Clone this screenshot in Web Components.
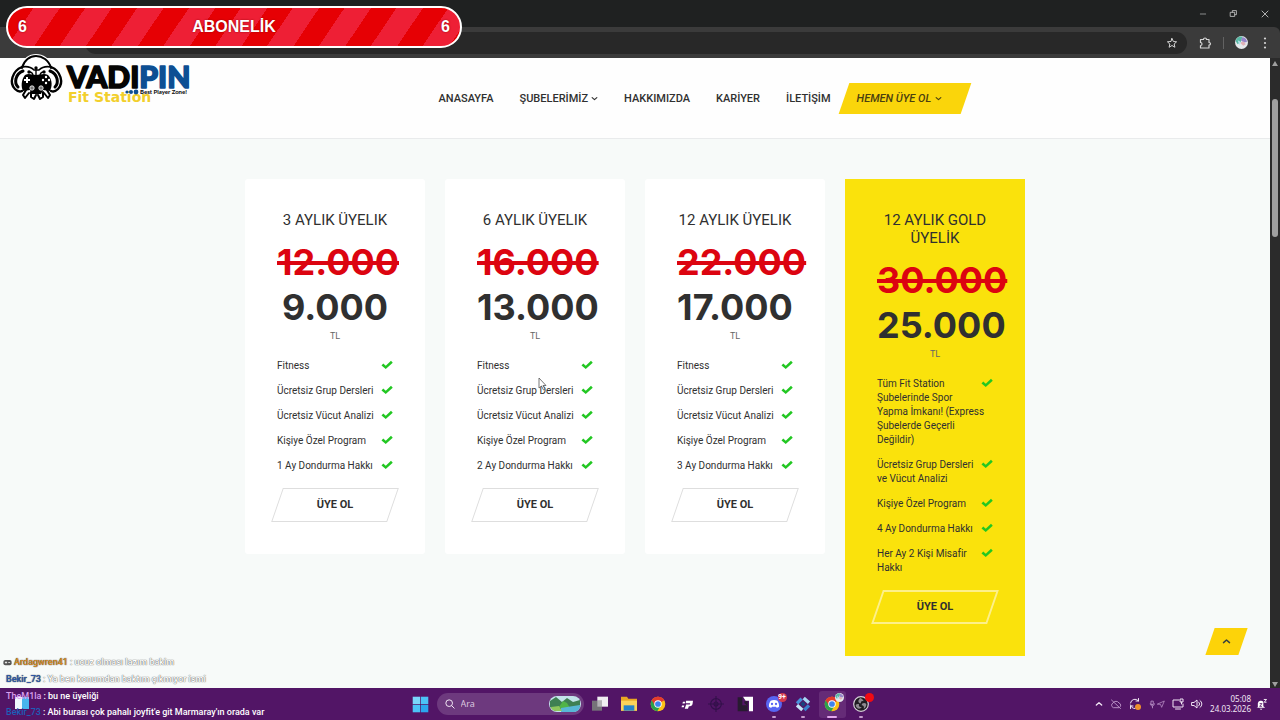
<!DOCTYPE html>
<html lang="tr">
<head>
<meta charset="utf-8">
<title>Vadipin Fit Station</title>
<style>
  * { box-sizing: border-box; }
  body {
    margin: 0;
    min-height: 100vh;
    display: flex;
    flex-direction: column;
    position: relative;
    font-family: Roboto, "Noto Sans", sans-serif;
    color: #303030;
    background: #f7faf9;
  }
  page-viewport { flex: 1; }
  .plans {
    display: grid;
    grid-template-columns: repeat(4, minmax(0, 1fr));
    align-items: start;
    gap: 20px;
    max-width: 780px;
    margin: 0 auto;
    padding: 40px 0 32px;
  }
  stream-goal { position: absolute; left: 6px; top: 6px; }
  .chat { position: absolute; left: 3px; bottom: 0; }
  mouse-pointer { position: absolute; left: 42%; top: 377px; }
</style>
</head>
<body>
  <browser-bar></browser-bar>

  <page-viewport>
    <site-header>
      <nav-link>ANASAYFA</nav-link>
      <nav-link menu>ŞUBELERİMİZ</nav-link>
      <nav-link>HAKKIMIZDA</nav-link>
      <nav-link>KARİYER</nav-link>
      <nav-link>İLETİŞİM</nav-link>
      <nav-link menu cta>HEMEN ÜYE OL</nav-link>
    </site-header>
    <main class="plans">
      <price-card old="12.000" price="9.000">
        <span slot="title">3 AYLIK ÜYELIK</span>
        <plan-feature>Fitness</plan-feature>
        <plan-feature>Ücretsiz Grup Dersleri</plan-feature>
        <plan-feature>Ücretsiz Vücut Analizi</plan-feature>
        <plan-feature>Kişiye Özel Program</plan-feature>
        <plan-feature>1 Ay Dondurma Hakkı</plan-feature>
      </price-card>
      <price-card old="16.000" price="13.000">
        <span slot="title">6 AYLIK ÜYELIK</span>
        <plan-feature>Fitness</plan-feature>
        <plan-feature>Ücretsiz Grup Dersleri</plan-feature>
        <plan-feature>Ücretsiz Vücut Analizi</plan-feature>
        <plan-feature>Kişiye Özel Program</plan-feature>
        <plan-feature>2 Ay Dondurma Hakkı</plan-feature>
      </price-card>
      <price-card old="22.000" price="17.000">
        <span slot="title">12 AYLIK ÜYELIK</span>
        <plan-feature>Fitness</plan-feature>
        <plan-feature>Ücretsiz Grup Dersleri</plan-feature>
        <plan-feature>Ücretsiz Vücut Analizi</plan-feature>
        <plan-feature>Kişiye Özel Program</plan-feature>
        <plan-feature>3 Ay Dondurma Hakkı</plan-feature>
      </price-card>
      <price-card gold old="30.000" price="25.000">
        <span slot="title">12 AYLIK GOLD ÜYELİK</span>
        <plan-feature>Tüm Fit Station<br>Şubelerinde Spor<br>Yapma İmkanı! (Express<br>Şubelerde Geçerli<br>Değildir)</plan-feature>
        <plan-feature>Ücretsiz Grup Dersleri<br>ve Vücut Analizi</plan-feature>
        <plan-feature>Kişiye Özel Program</plan-feature>
        <plan-feature>4 Ay Dondurma Hakkı</plan-feature>
        <plan-feature>Her Ay 2 Kişi Misafir<br>Hakkı</plan-feature>
      </price-card>
    </main>
  </page-viewport>

  <task-bar></task-bar>

  <stream-goal value="6" total="6">ABONELİK</stream-goal>
  <div class="chat">
    <chat-line user="Ardagwren41" color="#d98a1e" faded badge>ucuz olması lazım bakim</chat-line>
    <chat-line user="Bekir_73" color="#2b57a8" faded>Ya ben konumdan baktım çıkmıyor ismi</chat-line>
    <chat-line user="TheM1la" color="#d9a0ee">bu ne üyeliği</chat-line>
    <chat-line user="Bekir_73" color="#1c5fb8">Abi burası çok pahalı joyfit'e git Marmaray'ın orada var</chat-line>
  </div>
  <mouse-pointer></mouse-pointer>

<script>
// base class: puts a template in an open shadow root
class BaseElement extends HTMLElement {
  constructor() {
    super();
    this.attachShadow({ mode: "open" });
  }

  connectedCallback() {
    const template = document.createElement("template");
    template.innerHTML = `<style>* { box-sizing: border-box; }</style>` + this.render();
    this.shadowRoot.replaceChildren(template.content.cloneNode(true));
  }
}

const line = (d, width = 1.5) =>
  `<path d="${d}" fill="none" stroke="currentColor" stroke-width="${width}" stroke-linecap="round" stroke-linejoin="round"/>`;

const chromeBall = `
  <circle cx="12" cy="12" r="11" fill="#fbc116"/>
  <path d="M12 12 2.5 6.5A11 11 0 0 1 21.5 6.5z" fill="#e33b2e"/>
  <path d="M12 12 2.5 6.5A11 11 0 0 0 11 23l5-9z" fill="#2ba24c"/>
  <path d="M12 6.5h9.5A11 11 0 0 0 2.5 6.5L7 14z" fill="#e33b2e"/>
  <circle cx="12" cy="12" r="5.6" fill="#fff"/><circle cx="12" cy="12" r="4.3" fill="#3f83ee"/>`;

const icons = {
  check: `<path d="M1 13 4.500 9l5 4.500L20 3.500l3.500 4-14 12.500z" fill="#22c722"/>`,
  down: line("M4 9l8 7 8-7", 4),
  up: line("M4 15l8-7 8 7", 4),
  minimize: line("M4 12h16", 1.8),
  restore: line("M2 8h14v14H2zM8 7V2h14v14h-5", 2.600),
  close: line("M3 3l18 18M21 3 3 21", 2.4),
  star: line("M12 3l2.700 6 6.500.6-4.900 4.400 1.500 6.500L12 17l-5.800 3.500 1.500-6.500L2.800 9.600 9.300 9z", 2),
  puzzle: line("M3 5h6c0-4 6-4 6 0h5v6c4 0 4 5 0 5v6H3v-5c4 0 4-6 0-6z", 2.4),
  dots: `<g fill="currentColor"><circle cx="12" cy="3" r="2.200"/><circle cx="12" cy="12" r="2.200"/><circle cx="12" cy="21" r="2.200"/></g>`,
  avatar: `<circle cx="12" cy="12" r="12" fill="#e6e9ec"/><path d="M1 9A12 12 0 0 1 14 1l-3 9-6 5z" fill="#58b8a4"/><path d="M14 2c5 1 8 5 8 9l-6 1-5-4z" fill="#9585c9"/><path d="M9 12l7-2 4 5-5 3z" fill="#e0b2b8"/><path d="M5 8l6 3-3 6z" fill="#b6e3ee"/>`,
  start: `<g fill="#4cc3f7"><path d="M1 1h10.500v10.500H1z" fill="#7ad7fb"/><path d="M12.500 1H23v10.500H12.500z"/><path d="M1 12.500h10.500V23H1z"/><path d="M12.500 12.500H23V23H12.500z" fill="#2ba6ee"/></g>`,
  search: `<circle cx="10" cy="10" r="8" fill="none" stroke="currentColor" stroke-width="2.400"/>` + line("M16 16l6 6", 2.4),
  tasks: `<path d="M8 1h16v15H8z" fill="#f0eef1"/><path d="M0 7h15v15H0z" fill="#757378"/><path d="M8 7h7v9H8z" fill="#b3b1b5"/>`,
  folder: `<path d="M0 1h9l2 3h13v18H0z" fill="#e9a823"/><path d="M0 7h24v15H0z" fill="#fbd35a"/><path d="M4 14h16v8H4z" fill="#2484ca"/>`,
  chrome: chromeBall,
  chromeUser: chromeBall,
  playerP: `<g fill="#fff"><path d="M2 6h5l-1 4H1zM0 14h5l-1 4H-1z"/><path d="M9 4h15l-1 7c-1 4-4 5-8 5l-2 5H6l3-9h8l1-3H8z"/></g>`,
  target: `<g fill="none" stroke="#33104a" stroke-width="1.700"><circle cx="12" cy="12" r="8"/><circle cx="12" cy="12" r="3"/><path d="M12 0v24M0 12h24"/></g>`,
  corner: `<path d="M9 1h15v22h-6V7h-5z" fill="#fff"/><path d="M1 2h7v12h8v9H1z" fill="#281b30"/><path d="M11 8h5v7l-5-4z" fill="#281b30"/>`,
  discord: `<circle cx="12" cy="12" r="12" fill="#5865f2"/><path d="M7 7c3-1.300 7-1.300 10 0 2 3 3 6 2.500 9-1 .8-2 1.300-3.500 1.500l-1-1.500H9l-1 1.500c-1.500-.2-2.500-.7-3.500-1.500C4 13 5 10 7 7z" fill="#fff"/><g fill="#5865f2"><circle cx="9" cy="12" r="1.700"/><circle cx="15" cy="12" r="1.700"/></g>`,
  cubes: `<g fill="none" stroke-width="5"><path d="M3 11l7-7" stroke="#4893db"/><path d="M13 3l8 7" stroke="#a9d8f4"/><path d="M21 14l-7 7" stroke="#3a80cc"/><path d="M3 14l8 7" stroke="#c5e6f8"/></g><path d="M12 8l4 4-4 4-4-4z" fill="#17457f"/>`,
  obs: `<circle cx="12" cy="12" r="11" fill="#201d22" stroke="#d6d1d8" stroke-width="1.800"/><g fill="#8f8a92"><path d="M11 3c-4 3-4 8 1 8-1-3 2-4 4-3-1-3-3-4-5-5z"/><path d="M20 12c-2-2-7-2-7 2 3 0 4 2 3 5 3-1 4-4 4-7z"/><path d="M4 14c1 5 6 7 9 3-3 0-5-2-4-5-3 0-4 0-5 2z"/></g>`,
  cloud: line("M6 19a5 5 0 0 1 0-9 7 7 0 0 1 12 0 5 5 0 0 1 1 9zM3 4l18 17", 2),
  sync: line("M3 10a9 9 0 0 1 16-4V1M19 6h-5M3 14a9 9 0 0 0 9 7M3 21v-5h5", 2) + `<circle cx="18" cy="18" r="6" fill="#f0902c"/>`,
  mic: line("M9 3h5v9H9zM6 10c0 8 11 8 11 0M12 16v5", 2.4),
  place: line("M2 12 22 3l-8 19-3-8z", 2.4),
  monitor: line("M14 4H2v14h20v-6M7 22h10M17 2h5v6h-5zM19 8v4", 2),
  speaker: line("M2 9h4l6-5v16l-6-5H2zM15 8c3 3 3 5 0 8M18 5c5 4 5 10 0 14", 2),
  bell: `<path d="M4 18V9a7 7 0 0 1 12-3v10l4 3H1z" fill="#fff"/><path d="M8 21h6l-3 3z" fill="#fff"/><path d="M8 10h5l-5 6h5" stroke="#521566" stroke-width="1.800" fill="none"/><path d="M17 1h6l-5 6h5" stroke="#fff" stroke-width="2" fill="none"/>`,
  gamepad: `<rect x="1" y="5" width="22" height="14" rx="5" fill="#555"/><path d="M5 12h6M8 9v6M14 12h5" stroke="#fff" stroke-width="2"/>`,
};

class UiIcon extends BaseElement {
  render() {
    const size = this.getAttribute("size") || 12;
    return `
    <style>
      :host { display: block; flex: none; width: ${size}px; height: ${size}px; }
      svg { display: block; width: 100%; height: 100%; overflow: visible; }
    </style>
    <svg viewBox="0 0 24 24" aria-hidden="true">${icons[this.getAttribute("name")]}</svg>`;
  }
}

class BrowserBar extends BaseElement {
  render() {
    return `
    <style>
      :host { display: block; background: #1f2121; color: #d5d5d5; }
      button { display: grid; place-items: center; border: 0; padding: 0; background: none; color: inherit; }
      .title { display: flex; justify-content: flex-end; height: 27px; }
      .title button { width: 31px; }
      .tools {
        display: flex;
        align-items: center;
        height: 31px;
        padding: 0 9px 0 85px;
        background: #3b3b3b;
        border-radius: 0 6px 0 0;
      }
      .address {
        flex: 1;
        display: flex;
        align-items: center;
        justify-content: flex-end;
        height: 22px;
        margin-right: 12px;
        padding-right: 9px;
        border-radius: 11px;
        background: #282828;
      }
      .address input { flex: 1; border: 0; background: none; }
      .rule { width: 1px; height: 12px; margin: 0 11px 0 12px; background: #626262; }
      .menu { margin-left: 11px; }
    </style>
    <div class="title">
      <button aria-label="Simge durumuna küçült"><ui-icon name="minimize" size="8"></ui-icon></button>
      <button aria-label="Önceki boyut"><ui-icon name="restore" size="7"></ui-icon></button>
      <button aria-label="Kapat"><ui-icon name="close" size="8"></ui-icon></button>
    </div>
    <div class="tools">
      <div class="address">
        <input type="text" aria-label="Adres">
        <button aria-label="Yer işareti"><ui-icon name="star" size="12"></ui-icon></button>
      </div>
      <button aria-label="Uzantılar"><ui-icon name="puzzle" size="12"></ui-icon></button>
      <span class="rule"></span>
      <button aria-label="Profil"><ui-icon name="avatar" size="13"></ui-icon></button>
      <button class="menu" aria-label="Menü"><ui-icon name="dots" size="12"></ui-icon></button>
    </div>`;
  }
}

class PageViewport extends BaseElement {
  render() {
    return `
    <style>
      :host { display: flex; position: relative; }
      .page { flex: 1; min-width: 0; }
      .scrollbar {
        display: flex;
        flex-direction: column;
        align-items: center;
        width: 10px;
        padding: 0 0 1px;
        background: #2b2b2b;
      }
      .arrow { border: 3px solid transparent; border-bottom: 5px solid #9f9f9f; }
      .arrow.down { border-bottom: 0; border-top: 5px solid #9f9f9f; margin-top: auto; }
      .thumb { width: 6px; height: 22%; margin-top: 33px; border-radius: 3px; background: #9f9f9f; }
      .to-top {
        position: absolute;
        right: 37px;
        bottom: 33px;
        display: grid;
        place-items: center;
        width: 33px;
        height: 27px;
        border: 0;
        padding: 0;
        background: none;
        color: #36413f;
        isolation: isolate;
      }
      .to-top::before {
        content: "";
        position: absolute;
        inset: 0;
        z-index: -1;
        background: #fdd309;
        transform: skewX(-19deg);
      }
    </style>
    <div class="page"><slot></slot></div>
    <div class="scrollbar">
      <span class="arrow"></span>
      <span class="thumb"></span>
      <span class="arrow down"></span>
    </div>
    <button class="to-top" aria-label="Yukarı çık"><ui-icon name="up" size="9"></ui-icon></button>`;
  }
}

class BrandLogo extends BaseElement {
  render() {
    return `
    <style>
      :host { display: block; width: 182px; height: 54px; }
      svg { display: block; overflow: visible; }
    </style>
    <svg width="182" height="54" viewBox="0 0 182 54" role="img" aria-label="Vadipin Fit Station">
      <path d="M11 12C13 4 19 0 26 0s14 4 16 12c7 3 11 10 11 16-1 8-6 11-11 12-2 5-6 6-9 4-4 2-9 2-13 0-4 2-7 0-9-4C4 40-1 36-1 28 0 20 4 14 11 12z" fill="#fff"/>
      <g fill="none" stroke="#000" stroke-linecap="round" stroke-linejoin="round">
        <path d="M12 14C14 6 20 2 26 2s13 4 15 12" stroke-width="2"/>
        <path d="M12 13c5-1 9 0 12 3h5c3-3 7-4 12-3" stroke-width="1.600"/>
        <path d="M12 13C2 17-1 29 5 35c2 2 5 3 7 2M41 13c10 4 13 16 7 22-2 2-5 3-7 2" stroke-width="2.400"/>
        <path d="M13 17c-8 3-9 12-5 16M40 17c8 3 9 12 5 16" stroke-width="3"/>
        <path d="M26 22v-8M23 22c0-3-2-4-4-4M30 22c0-3 2-4 4-4" stroke-width="1.400"/>
        <path d="M16 36l-3 5 2 3 4-5M21 38v5l3 2 2-4M28 41l2 4 3-2v-5M34 39l4 5 2-3-3-5" stroke-width="2"/>
      </g>
      <g><circle cx="26" cy="14" r="1.700"/><circle cx="19" cy="18" r="1.700"/><circle cx="34" cy="18" r="1.700"/></g>
      <path d="M15 21c4-2 7 0 11 0s8-2 12 0c5 5 4 12 2 16l-7-1-2 4h-9l-2-4-7 1c-2-4-2-11 2-16z"/>
      <path d="M17 23v6M14 26h6" stroke="#fff" stroke-width="2"/>
      <g fill="#fff"><circle cx="36" cy="23" r="1.200"/><circle cx="36" cy="29" r="1.200"/><circle cx="33" cy="26" r="1.200"/><circle cx="39" cy="26" r="1.200"/></g>
      <g fill="#777" stroke="#fff" stroke-width=".8"><circle cx="22" cy="34" r="2.200"/><circle cx="31" cy="34" r="2.200"/></g>
      <text x="58" y="48" font-family="DejaVu Sans" font-weight="700" font-size="14" fill="#f2cf2c">Fit Station</text>
      <g font-family="Lato" font-weight="900" font-size="30" stroke-width="1.600" stroke-linejoin="round">
        <text x="57" y="34" fill="#050505" stroke="#050505">VADI<tspan fill="#0d4f93" stroke="#0d4f93">PIN</tspan></text>
      </g>
      <g fill="#0d4f93"><circle cx="117" cy="38" r="1.600"/><circle cx="121" cy="38" r="2"/><circle cx="126" cy="38" r="2.400"/></g>
      <text x="130" y="40" font-family="Lato" font-weight="900" font-size="6" fill="#111">Best Player Zone!</text>
    </svg>`;
  }
}

class SiteHeader extends BaseElement {
  render() {
    return `
    <style>
      :host {
        display: flex;
        justify-content: space-between;
        height: 81px;
        padding: 0 24% 0 10px;
        background: #fefefe;
        border-bottom: 1px solid #e9ebec;
      }
      brand-logo { margin-top: -4px; position: relative; }
      nav { display: flex; align-items: center; gap: 26px; }
    </style>
    <brand-logo></brand-logo>
    <nav><slot></slot></nav>`;
  }
}

class NavLink extends BaseElement {
  render() {
    const chevron = this.hasAttribute("menu") ? `<ui-icon name="down" size="7"></ui-icon>` : "";
    return `
    <style>
      :host { display: block; }
      a {
        display: flex;
        align-items: center;
        gap: 3px;
        color: #303030;
        font-size: 11px;
        font-weight: 500;
        line-height: 31px;
        text-decoration: none;
        white-space: nowrap;
      }
      :host([cta]) { margin-left: -13px; }
      :host([cta]) a {
        position: relative;
        isolation: isolate;
        gap: 4px;
        padding: 0 23px 0 13px;
        color: #4a4010;
        font-style: italic;
      }
      :host([cta]) a::before {
        content: "";
        position: absolute;
        inset: 0;
        z-index: -1;
        background: #fad50b;
        transform: skewX(-19deg);
      }
    </style>
    <a href="#"><slot></slot>${chevron}</a>`;
  }
}

class PriceCard extends BaseElement {
  render() {
    return `
    <style>
      :host {
        --line: 1px solid #dedede;
        display: block;
        padding: 32px;
        border-radius: 3px;
        background: #fff;
        text-align: center;
      }
      :host([gold]) { --line: 2px solid #fdf08a; background: #fae20c; border-radius: 0; }
      h2 { margin: 0 0 11px; font-size: 15px; font-weight: 400; line-height: 18px; }
      del, strong {
        display: block;
        font-family: Inter, sans-serif;
        font-size: 36px;
        font-weight: 700;
        line-height: 45px;
        white-space: nowrap;
      }
      del { color: #dc0410; text-decoration-thickness: 4px; }
      small { display: block; font-size: 9px; line-height: 12px; color: #666; margin-bottom: 17px; }
      ul {
        display: flex;
        flex-direction: column;
        gap: 11px;
        margin: 0 0 15px;
        padding: 0;
      }
      button {
        position: relative;
        isolation: isolate;
        width: 100%;
        height: 34px;
        border: 0;
        padding: 0;
        background: none;
        font: 700 11px/14px Roboto, sans-serif;
        color: inherit;
      }
      button::before {
        content: "";
        position: absolute;
        inset: 0;
        z-index: -1;
        border: var(--line);
        transform: skewX(-19deg);
      }
    </style>
    <h2><slot name="title"></slot></h2>
    <del>${this.getAttribute("old")}</del>
    <strong>${this.getAttribute("price")}</strong>
    <small>TL</small>
    <ul role="list"><slot></slot></ul>
    <button>ÜYE OL</button>`;
  }
}

class PlanFeature extends BaseElement {
  render() {
    this.setAttribute("role", "listitem");
    return `
    <style>
      :host {
        display: grid;
        grid-template-columns: minmax(0, 1fr) 12px;
        font-size: 10px;
        line-height: 14px;
        text-align: left;
        white-space: nowrap;
      }
    </style>
    <span><slot></slot></span>
    <ui-icon name="check" size="12"></ui-icon>`;
  }
}

class StreamGoal extends BaseElement {
  render() {
    return `
    <style>
      :host {
        display: flex;
        align-items: center;
        justify-content: space-between;
        width: 456px;
        height: 42px;
        padding: 0 10px;
        border: 2px solid #fff;
        border-radius: 21px;
        background: repeating-linear-gradient(124deg, #e60004 0 21px, #ee1f35 21px 43px);
        color: #fff;
        font: 700 16px/20px "Liberation Sans", sans-serif;
        text-shadow: 0 0 2px #90000a;
      }
    </style>
    <span>${this.getAttribute("value")}</span>
    <span><slot></slot></span>
    <span>${this.getAttribute("total")}</span>`;
  }
}

class ChatLine extends BaseElement {
  render() {
    const badge = this.hasAttribute("badge") ? `<ui-icon name="gamepad" size="9"></ui-icon>` : "";
    return `
    <style>
      :host {
        display: flex;
        align-items: center;
        gap: 2px;
        padding-left: 3px;
        color: #fff;
        font-size: 9px;
        font-weight: 500;
        line-height: 16px;
        white-space: nowrap;
      }
      :host([faded]) { text-shadow: 0 0 1px #555, 0 0 1px #777; line-height: 17px; }
      :host([badge]) { padding-left: 0; }
      b { font-weight: 500; color: ${this.getAttribute("color")}; }
    </style>
    ${badge}<b>${this.getAttribute("user")}</b><span>: <slot></slot></span>`;
  }
}

class MousePointer extends BaseElement {
  render() {
    return `
    <style>
      :host { display: block; width: 9px; height: 14px; pointer-events: none; }
      svg { display: block; }
    </style>
    <svg width="9" height="14" viewBox="0 0 9 14">
      <path d="M1 1v10l2.500-2 2 4 1.500-1-2-3.500h3z" fill="#fff" stroke="#555" stroke-width=".8"/>
    </svg>`;
  }
}

class TaskBar extends BaseElement {
  render() {
    const apps = [
      ["tasks", "Görev görünümü"], ["folder", "Dosya Gezgini"], ["chrome", "Chrome"],
      ["playerP", "Oyuncu"], ["target", "Nişangah"], ["corner", "Kısayol"],
      ["discord", "Discord", "run"], ["cubes", "Araçlar", "run"],
      ["chromeUser", "Chrome profili", "run active"], ["obs", "OBS", "run"],
    ];
    const badges = {
      discord: `<i class="badge">9+</i>`,
      chromeUser: `<ui-icon class="pin" name="avatar" size="9"></ui-icon>`,
      obs: `<i class="badge rec"></i>`,
    };
    return `
    <style>
      :host {
        display: grid;
        grid-template-columns: 1fr auto 1fr;
        align-items: center;
        height: 32px;
        padding: 0 13px 0 15px;
        background: #521566;
        color: #f1e6f4;
      }
      button { display: grid; place-items: center; border: 0; padding: 0; background: none; color: inherit; }
      .widgets { justify-self: start; align-self: start; margin-top: 9px; display: flex; }
      .widgets i { width: 7px; height: 12px; background: #eef8fc; }
      .widgets i + i { background: #47b4ec; }
      .center { display: flex; align-items: center; margin-left: 4px; }
      .search {
        display: flex;
        align-items: center;
        gap: 6px;
        width: 147px;
        height: 22px;
        margin: 0 1px 0 8px;
        padding: 0 3px 0 8px;
        border-radius: 11px;
        background: #6d397e;
      }
      .search input {
        flex: 1;
        min-width: 0;
        border: 0;
        padding: 0;
        background: none;
        color: inherit;
        font: 9px/12px "Noto Sans", sans-serif;
      }
      .search input::placeholder { color: #d9c6df; }
      .app { position: relative; width: 27px; height: 27px; margin-left: 2px; border-radius: 3px; }
      .active { background: #652b77; }
      .run::after {
        content: "";
        position: absolute;
        bottom: 0;
        width: 4px;
        height: 2px;
        border-radius: 1px;
        background: #c59bcd;
      }
      .active::after { width: 10px; background: #e3a8ee; }
      .badge {
        position: absolute;
        right: 1px;
        top: 2px;
        width: 9px;
        height: 9px;
        border-radius: 5px;
        background: #d5384e;
        color: #fff;
        font: 700 7px/9px Roboto, sans-serif;
      }
      .rec { background: #f00b12; }
      .pin { position: absolute; right: 2px; top: 2px; }
      .tray { display: flex; align-items: center; justify-content: flex-end; gap: 7px; }
      .pair { display: flex; color: #b68cc3; }
      .clock { text-align: right; font: 8px/10px "Noto Sans", sans-serif; }
      .clock + button { margin-left: -2px; }
      .dim { color: #b68cc3; }
    </style>
    <button class="widgets" aria-label="Pencere öğeleri"><i></i><i></i></button>
    <div class="center">
      <button aria-label="Başlat"><ui-icon name="start" size="17"></ui-icon></button>
      <label class="search">
        <ui-icon name="search" size="10"></ui-icon>
        <input type="text" placeholder="Ara" aria-label="Ara">
        <svg width="32" height="16" viewBox="0 0 32 16">
          <rect width="32" height="16" rx="8" fill="#c3e3ea"/>
          <path d="M1 5l6-4 6 5 5-4 6 4 7-2v7l-6 4H6L1 11z" fill="#3f8053"/>
          <path d="M10 11l4-6 4 2 3 5-4 3z" fill="#51b447"/>
          <path d="M12 12l6-1 13-2c0 5-3 7-7 7H12z" fill="#58b7d6"/>
          <path d="M2 11l8-1 3 5H7c-3 0-5-2-5-4z" fill="#8fc65c"/>
        </svg>
      </label>
      ${apps.map(([icon, label, state = ""]) => `
        <button class="app ${state}" aria-label="${label}">
          <ui-icon name="${icon}" size="${icon === "playerP" ? 11 : 16}"></ui-icon>${badges[icon] || ""}
        </button>`).join("")}
    </div>
    <div class="tray">
      <button aria-label="Gizli simgeler"><ui-icon name="up" size="8"></ui-icon></button>
      <button class="dim" aria-label="OneDrive"><ui-icon name="cloud" size="12"></ui-icon></button>
      <button aria-label="Güncelleme"><ui-icon name="sync" size="12"></ui-icon></button>
      <span class="pair">
        <ui-icon name="mic" size="9"></ui-icon>
        <ui-icon name="place" size="8"></ui-icon>
      </span>
      <button aria-label="Ağ"><ui-icon name="monitor" size="12"></ui-icon></button>
      <button aria-label="Ses"><ui-icon name="speaker" size="12"></ui-icon></button>
      <time class="clock" datetime="2026-03-24T05:08">05:08<br>24.03.2026</time>
      <button aria-label="Bildirimler"><ui-icon name="bell" size="11"></ui-icon></button>
    </div>`;
  }
}

customElements.define("ui-icon", UiIcon);
customElements.define("browser-bar", BrowserBar);
customElements.define("page-viewport", PageViewport);
customElements.define("brand-logo", BrandLogo);
customElements.define("site-header", SiteHeader);
customElements.define("nav-link", NavLink);
customElements.define("price-card", PriceCard);
customElements.define("plan-feature", PlanFeature);
customElements.define("stream-goal", StreamGoal);
customElements.define("chat-line", ChatLine);
customElements.define("mouse-pointer", MousePointer);
customElements.define("task-bar", TaskBar);
</script>
</body>
</html>
